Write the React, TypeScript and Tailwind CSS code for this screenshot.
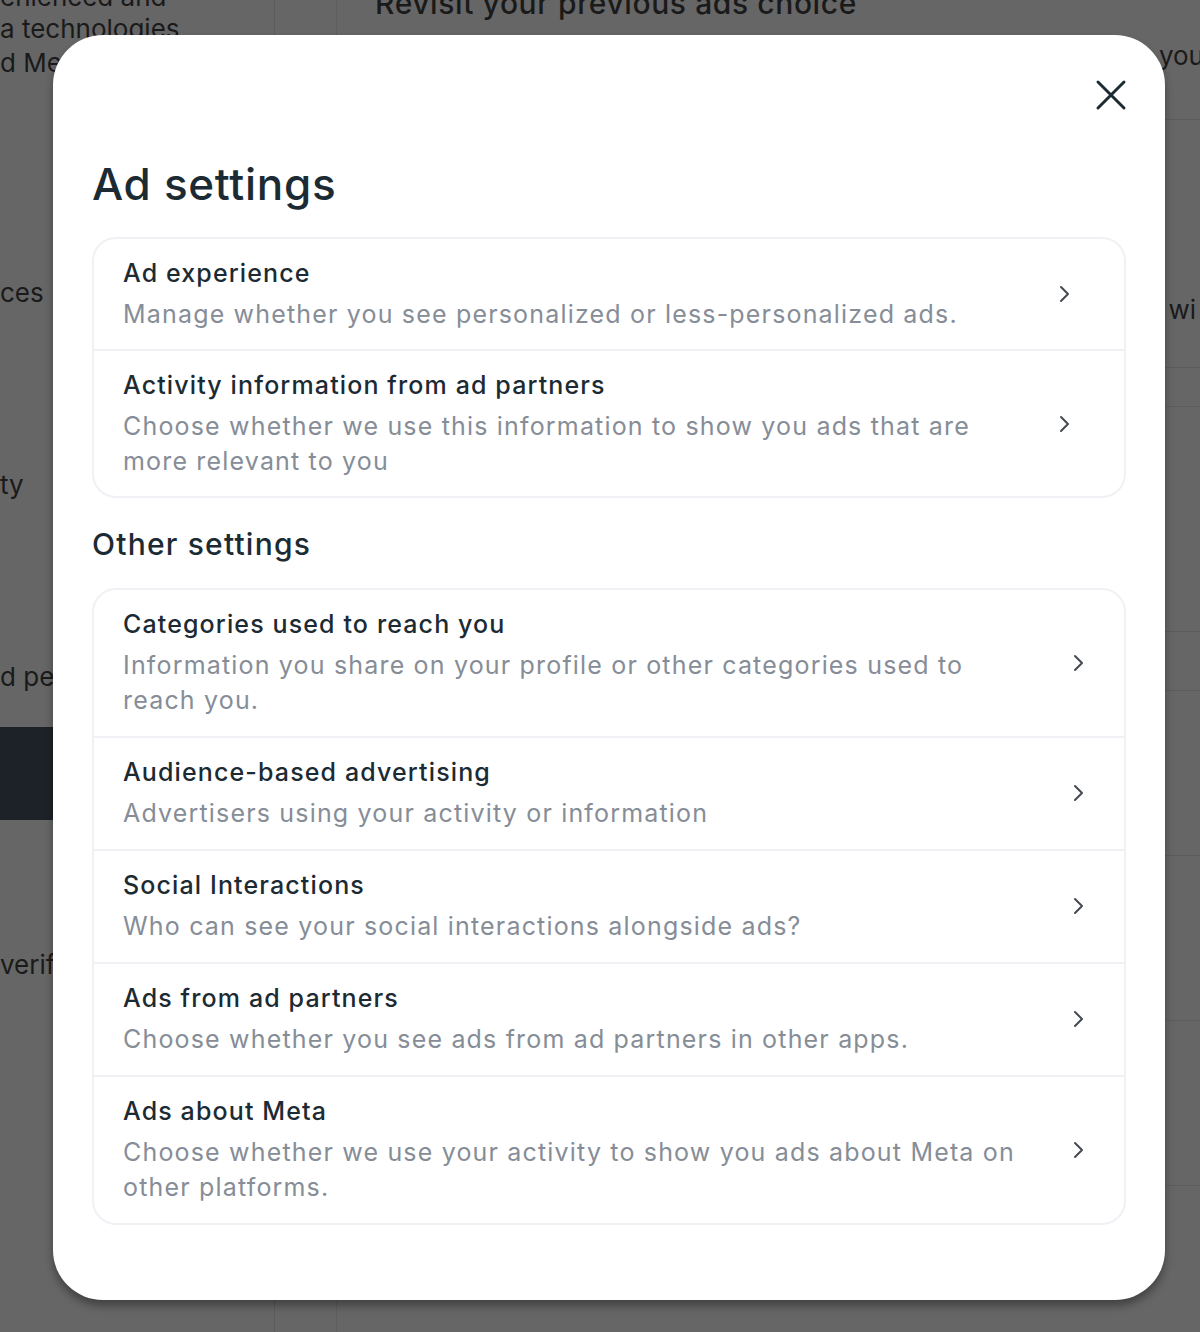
import { ReactNode } from "react";

type Row = { title: string; desc: string };

const adRows: Row[] = [
  { title: "Ad experience", desc: "Manage whether you see personalized or less-personalized ads." },
  {
    title: "Activity information from ad partners",
    desc: "Choose whether we use this information to show you ads that are more relevant to you",
  },
];

const otherRows: Row[] = [
  {
    title: "Categories used to reach you",
    desc: "Information you share on your profile or other categories used to reach you.",
  },
  { title: "Audience-based advertising", desc: "Advertisers using your activity or information" },
  { title: "Social Interactions", desc: "Who can see your social interactions alongside ads?" },
  { title: "Ads from ad partners", desc: "Choose whether you see ads from ad partners in other apps." },
  {
    title: "Ads about Meta",
    desc: "Choose whether we use your activity to show you ads about Meta on other platforms.",
  },
];

function Chevron() {
  return (
    <svg width="12" height="20" viewBox="0 0 12 20" fill="none">
      <path d="M3 3l7 7-7 7" stroke="#454a52" strokeWidth="2" strokeLinecap="round" strokeLinejoin="round" />
    </svg>
  );
}

function SettingsCard({
  rows,
  textWidth,
  rowPad,
}: {
  rows: Row[];
  textWidth: string;
  rowPad: string;
}) {
  return (
    <div className="overflow-hidden rounded-[24px] border-2 border-[#eff1f4]">
      {rows.map((row, i) => (
        <div
          key={row.title}
          className={`flex items-center justify-between pl-[29px] pt-[17px] ${rowPad} ${
            i > 0 ? "border-t-2 border-[#eff1f4]" : ""
          }`}
        >
          <div className={textWidth}>
            <div className="text-[25px] leading-[35px] font-medium tracking-[0.045em] text-[#1c2b33]">{row.title}</div>
            <div className="mt-[6px] text-[25px] leading-[35px] tracking-[0.047em] text-[#868d97]">{row.desc}</div>
          </div>
          <Chevron />
        </div>
      ))}
    </div>
  );
}

function BgLine({ children, className }: { children?: ReactNode; className: string }) {
  return <div className={`whitespace-nowrap text-[26px] leading-[34px] text-[#1a1a1a] ${className}`}>{children}</div>;
}

export default function App() {
  return (
    <div
      className="relative h-[1332px] w-[1200px] overflow-hidden bg-[#666666]"
      style={{ fontFamily: "Inter, 'Noto Sans', sans-serif" }}
    >
      {/* page behind the dialog */}
      <div className="flex h-full">
        <div className="w-[275px] shrink-0 border-r border-[#5c5c5c]">
          <BgLine className="-mt-[20px]">enienced and</BgLine>
          <BgLine className="-mt-[2px]">a technologies</BgLine>
          <BgLine className="">d Meta</BgLine>
          <BgLine className="mt-[196px]">ces</BgLine>
          <BgLine className="mt-[158px]">ty</BgLine>
          <BgLine className="mt-[158px]">d personalization</BgLine>
          <div className="mt-[33px] h-[93px] bg-[#1d2228]" />
          <BgLine className="mt-[128px]">verification</BgLine>
        </div>
        <div className="w-[62px] shrink-0 border-r border-[#5e5e5e]" />
        <div className="flex-1">
          <div className="-mt-[16px] pl-[38px] text-[30px] leading-[38px] font-medium tracking-[0.02em] text-[#1a1a1a]">
            Revisit your previous ads choice
          </div>
          <div className="mt-[14px] flex justify-end">
            <span className="mr-[-4px] text-[26px] text-[#1a1a1a]">you</span>
          </div>
          <div className="mt-[44px] border-t border-[#5c5c5c]" />
          <div className="mt-[170px] flex justify-end">
            <span className="mr-[4px] text-[26px] text-[#1a1a1a]">wi</span>
          </div>
          <div className="mt-[38px] border-t border-[#5c5c5c]" />
          <div className="mt-[38px] border-t border-[#5c5c5c]" />
          <div className="mt-[224px] border-t border-[#5c5c5c]" />
          <div className="mt-[58px] border-t border-[#5c5c5c]" />
          <div className="mt-[164px] border-t border-[#5c5c5c]" />
          <div className="mt-[164px] border-t border-[#5c5c5c]" />
          <div className="mt-[164px] border-t border-[#5c5c5c]" />
        </div>
      </div>

      {/* dialog */}
      <div className="absolute inset-0 pl-[53px] pt-[35px]">
        <div className="h-[1265px] w-[1112px] rounded-[50px] bg-white px-[39px] pt-[40px] shadow-[0_6px_8px_rgba(0,0,0,0.35)]">
          <div className="flex justify-end">
            <button className="-mr-[5px] flex h-[40px] w-[40px] items-center justify-center">
              <svg width="32" height="32" viewBox="0 0 32 32" fill="none">
                <path d="M3 3l26 26M29 3L3 29" stroke="#1c2b33" strokeWidth="3" strokeLinecap="round" />
              </svg>
            </button>
          </div>
          <h1 className="mt-[43px] text-[44px] leading-[52px] font-medium tracking-[0.016em] text-[#1c2b33]">
            Ad settings
          </h1>
          <div className="mt-[27px]">
            <SettingsCard rows={adRows} textWidth="w-[890px]" rowPad="pr-[54px] pb-[17px]" />
          </div>
          <h2 className="mt-[28px] text-[30px] leading-[36px] font-medium tracking-[0.04em] text-[#1c2b33]">
            Other settings
          </h2>
          <div className="mt-[26px]">
            <SettingsCard rows={otherRows} textWidth="w-[910px]" rowPad="pr-[40px] pb-[18px]" />
          </div>
        </div>
      </div>
    </div>
  );
}
